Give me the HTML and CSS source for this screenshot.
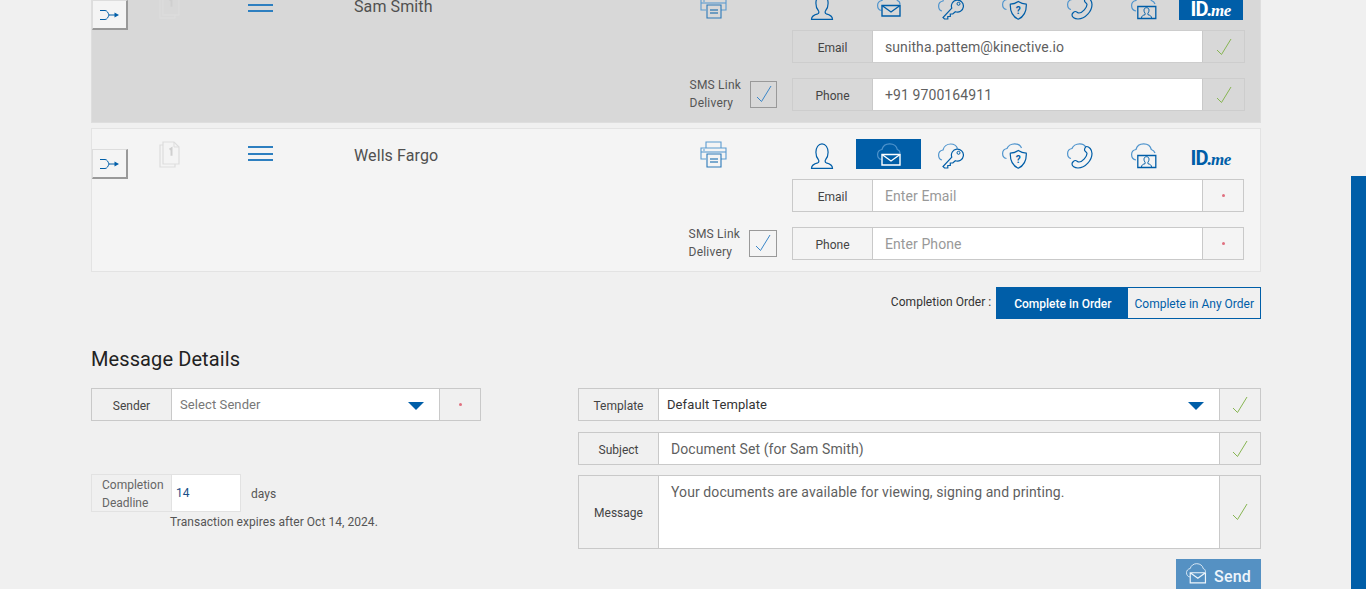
FILE: index.html
```html
<!DOCTYPE html>
<html lang="en">
<head>
<meta charset="utf-8">
<title>Message Details</title>
<link rel="stylesheet" href="styles.css">
</head>
<body>
<svg class="defs" width="0" height="0" aria-hidden="true">
  <defs>
    <symbol id="i-shuffle" viewBox="0 0 22 12"><path d="M1 1.5h5c2 0 3 2 4 4.500c-1 2.500-2 4.500-4 4.500H1M10 6h7" fill="none" stroke="currentColor" stroke-width="1"/><path d="M15.500 3.500L20 6l-4.500 2.500z" fill="currentColor"/></symbol>
    <symbol id="i-doc" viewBox="0 0 22 27"><path d="M4 4H1v22h15v-3" fill="none" stroke="currentColor" stroke-width="1.200"/><path d="M4 1h11l5 5v17H4z" fill="none" stroke="currentColor" stroke-width="1.200"/><path d="M15 1v5h5" fill="none" stroke="currentColor"/><path d="M10.500 8.500l2-1.200v7.500" fill="none" stroke="#cfcfcf" stroke-width="2"/></symbol>
    <symbol id="i-print" viewBox="0 0 27 27"><g fill="none" stroke="#5b9bd0" stroke-width="1.100"><path d="M6 7V1h15v6"/><path d="M6 18H1V7h25v11h-5"/><path d="M1 11h25"/><path d="M7 13h14v13H7z" stroke="#2a78b8"/><path d="M3 9h2"/><path d="M10 18h8M10 21h8" stroke="#005ea8"/></g></symbol>
    <symbol id="i-person" viewBox="0 0 26 26"><path d="M2.500 25.300c0-3 2.200-4.500 6.300-5.500c1.300-.5 1.300-2.300.5-3.300c-1.600-1.700-2.400-4.200-2.400-7.200c0-4.800 2.600-8.500 6.100-8.500s6.100 3.700 6.100 8.500c0 3-.8 5.500-2.400 7.200c-.8 1-.8 2.800.5 3.300c4.100 1 6.300 2.500 6.300 5.500z" fill="none" stroke="currentColor" stroke-width="1.200"/></symbol>
    <symbol id="i-mail" viewBox="0 0 26 26"><path class="cloud" d="M4.500 16.500C2 16 .6 14 .6 11.500C.6 9 2.300 7 5 6.500C5.800 3 9 .8 12.700 .8C16.800 .8 19.800 3.300 20.300 6.500C22 7 23 8.500 23 10.500" fill="none" stroke-width="1.200"/><path d="M5 11.500h18v10.500H5z" fill="none" stroke="currentColor" stroke-width="1.400"/><path d="M5 11.500l9 6.500l9-6.500" fill="none" stroke="currentColor" stroke-width="1.400"/></symbol>
    <symbol id="i-key" viewBox="0 0 26 26"><path class="cloud" d="M4 17C1.800 16.500.6 14.500.6 12C.6 9.500 2.300 7.500 5 7C5.800 3.500 9 1 12.700 1C16 1 18.500 2.800 19.500 5.500" fill="none" stroke-width="1.200"/><path d="M13.800 14.200a6 6 0 1 1 3.500 3.500L14.800 20h-2.500v2.500h-2.500V25H6.500L5 23.500z" fill="none" stroke="currentColor" stroke-width="1.200"/><circle cx="20.500" cy="9.800" r="1.500" fill="none" stroke="currentColor"/></symbol>
    <symbol id="i-shield" viewBox="0 0 26 26"><path class="cloud" d="M4.500 15.500C2 15 .6 13 .6 10.500C.6 8 2.300 6 5 5.500C5.800 3 9 .8 12.700 .8C15.800 .8 18.500 2.500 19.500 5" fill="none" stroke-width="1.200"/><path d="M16.300 7.500c2.500 1.700 5 2.500 8 2.700c.3 7-2.500 12.500-8 15c-5.500-2.500-8.300-8-8-15c3-.2 5.500-1 8-2.700z" fill="none" stroke="currentColor" stroke-width="1.200"/><text x="16.300" y="19.500" class="svg-q">?</text></symbol>
    <symbol id="i-phone" viewBox="0 0 26 26"><path class="cloud" d="M4 15.500C1.800 15 .6 13 .6 10.500C.6 8 2.300 6 5 5.500C5.800 3 9 .8 12.700 .8C15.800 .8 18 2.300 19 4.500" fill="none" stroke-width="1.200"/><path d="M19.500 3.500c2.500 0 5.500 3 5.500 7c0 6.500-6.500 14.500-14 14.500c-3.500 0-6-2-6-4c0-1.300 1.800-3.500 3.500-3.500c1.300 0 2 1.500 3.500 1.500c3.500 0 8-5.500 8-8.500c0-1.500-2.500-2-2.500-3.500c0-1.500 1-3.500 2-3.500z" fill="none" stroke="currentColor" stroke-width="1.200"/></symbol>
    <symbol id="i-id" viewBox="0 0 26 26"><path class="cloud" d="M5 17C2 16.500.6 14 .6 11.500C.6 9 2.300 7 5 6.500C5.800 3 9 .8 12.700 .8C16.500 .8 19.500 3 20.300 6.500C22 7 23.500 8.500 24 10" fill="none" stroke-width="1.200"/><path d="M6.800 12.500h18v12h-18z" fill="none" stroke="currentColor" stroke-width="1.300"/><path d="M10.500 24c0-2 1.500-2.800 3.500-3.300c.5-.5.300-1-.2-1.800c-.6-1-.8-1.700-.8-2.700c0-1.500 1-2.500 2.500-2.500s2.500 1 2.500 2.500c0 1-.2 1.700-.8 2.700c-.5.800-.7 1.300-.2 1.800c2 .5 3.500 1.300 3.500 3.300" fill="none" stroke="currentColor"/></symbol>
    <symbol id="i-check" viewBox="0 0 16 18"><path d="M1 12l4.500 4.500L15 1" fill="none" stroke="currentColor" stroke-width="1"/></symbol>
    <symbol id="i-send" viewBox="0 0 26 26"><path d="M4.500 16.500C2 16 .6 14 .6 11.500C.6 9 2.300 7 5 6.500C5.800 3 9 .8 12.700 .8C16.800 .8 19.800 3.300 20.300 6.500C22 7 23 8.500 23 10.500" fill="none" stroke="currentColor" stroke-width="1"/><path d="M5 11.500h18v12H5zM5 11.500l9 6.500l9-6.500" fill="none" stroke="currentColor" stroke-width="1.400"/></symbol>
  </defs>
</svg>

<main class="page">
  <section class="card card-selected">
    <div class="card-left">
      <div class="card-head">
        <button class="shuffle" type="button"><svg class="shuffle-icon"><use href="#i-shuffle"/></svg></button>
        <svg class="doc-icon"><use href="#i-doc"/></svg>
        <div class="menu-lines"><span></span><span></span><span></span></div>
        <div class="signer-name">Sam Smith</div>
        <svg class="print-icon"><use href="#i-print"/></svg>
      </div>
      <div class="sms-row">
        <div class="sms-label">SMS Link<br>Delivery</div>
        <div class="sms-box"><svg class="sms-check"><use href="#i-check"/></svg></div>
      </div>
    </div>
    <div class="card-right">
      <div class="tabs">
        <div class="tab"><svg class="tab-icon"><use href="#i-person"/></svg></div>
        <div class="tab"><svg class="tab-icon"><use href="#i-mail"/></svg></div>
        <div class="tab"><svg class="tab-icon"><use href="#i-key"/></svg></div>
        <div class="tab"><svg class="tab-icon"><use href="#i-shield"/></svg></div>
        <div class="tab"><svg class="tab-icon"><use href="#i-phone"/></svg></div>
        <div class="tab"><svg class="tab-icon"><use href="#i-id"/></svg></div>
        <div class="tab tab-active"><span class="idme">ID.<em>me</em></span></div>
      </div>
      <div class="field">
        <div class="field-label">Email</div>
        <div class="field-value">sunitha.pattem@kinective.io</div>
        <div class="field-status"><svg class="ok"><use href="#i-check"/></svg></div>
      </div>
      <div class="field">
        <div class="field-label">Phone</div>
        <div class="field-value">+91 9700164911</div>
        <div class="field-status"><svg class="ok"><use href="#i-check"/></svg></div>
      </div>
    </div>
  </section>

  <section class="card">
    <div class="card-left">
      <div class="card-head">
        <button class="shuffle" type="button"><svg class="shuffle-icon"><use href="#i-shuffle"/></svg></button>
        <svg class="doc-icon"><use href="#i-doc"/></svg>
        <div class="menu-lines"><span></span><span></span><span></span></div>
        <div class="signer-name">Wells Fargo</div>
        <svg class="print-icon"><use href="#i-print"/></svg>
      </div>
      <div class="sms-row">
        <div class="sms-label">SMS Link<br>Delivery</div>
        <div class="sms-box"><svg class="sms-check"><use href="#i-check"/></svg></div>
      </div>
    </div>
    <div class="card-right">
      <div class="tabs">
        <div class="tab"><svg class="tab-icon"><use href="#i-person"/></svg></div>
        <div class="tab tab-active"><svg class="tab-icon"><use href="#i-mail"/></svg></div>
        <div class="tab"><svg class="tab-icon"><use href="#i-key"/></svg></div>
        <div class="tab"><svg class="tab-icon"><use href="#i-shield"/></svg></div>
        <div class="tab"><svg class="tab-icon"><use href="#i-phone"/></svg></div>
        <div class="tab"><svg class="tab-icon"><use href="#i-id"/></svg></div>
        <div class="tab"><span class="idme">ID.<em>me</em></span></div>
      </div>
      <div class="field">
        <div class="field-label">Email</div>
        <div class="field-value placeholder">Enter Email</div>
        <div class="field-status"><span class="req"></span></div>
      </div>
      <div class="field">
        <div class="field-label">Phone</div>
        <div class="field-value placeholder">Enter Phone</div>
        <div class="field-status"><span class="req"></span></div>
      </div>
    </div>
  </section>

  <div class="order-row">
    <span class="order-label">Completion Order :</span>
    <div class="order-toggle">
      <span class="order-opt order-on">Complete in Order</span>
      <span class="order-opt">Complete in Any Order</span>
    </div>
  </div>

  <h2 class="section-title">Message Details</h2>

  <div class="details">
    <div class="details-left">
      <div class="field field-sm">
        <div class="field-label">Sender</div>
        <div class="field-value select muted">Select Sender<span class="caret"></span></div>
        <div class="field-status"><span class="req"></span></div>
      </div>
      <div class="deadline">
        <div class="deadline-label">Completion Deadline</div>
        <div class="deadline-value">14</div>
        <div class="deadline-unit">days</div>
      </div>
      <div class="deadline-note">Transaction expires after Oct 14, 2024.</div>
    </div>
    <div class="details-right">
      <div class="field field-sm">
        <div class="field-label">Template</div>
        <div class="field-value select dark">Default Template<span class="caret"></span></div>
        <div class="field-status"><svg class="ok"><use href="#i-check"/></svg></div>
      </div>
      <div class="field field-sm field-subject">
        <div class="field-label">Subject</div>
        <div class="field-value">Document Set (for Sam Smith)</div>
        <div class="field-status"><svg class="ok"><use href="#i-check"/></svg></div>
      </div>
      <div class="field field-sm field-tall">
        <div class="field-label">Message</div>
        <div class="field-value field-text">Your documents are available for viewing, signing and printing.</div>
        <div class="field-status"><svg class="ok"><use href="#i-check"/></svg></div>
      </div>
      <div class="send-row">
        <button class="send" type="button"><svg class="send-icon"><use href="#i-send"/></svg>Send</button>
      </div>
    </div>
  </div>
</main>
<div class="side-bar"></div>
</body>
</html>
```

FILE: styles.css
```css
* { box-sizing: border-box; }
html, body { margin: 0; height: 589px; overflow: hidden; }
body { background: #f0f0f0; color: #444; font-family: Roboto, "Liberation Sans", sans-serif; position: relative; }
.defs { position: absolute; }
.page { width: 1170px; margin: -21px 0 0 91px; }

.card { display: flex; height: 144px; background: #f4f4f4; border: 1px solid #e3e3e3; margin-bottom: 5px; }
.card-selected { background: #d8d8d8; border-color: #dedede; }
.card-left { width: 700px; display: flex; flex-direction: column; justify-content: space-between; }
.card-head { display: flex; align-items: flex-start; }
.shuffle { width: 36px; height: 30px; margin-top: 20px; padding: 0; background: #f4f4f4; border: 0; border-top: 1px solid #ddd; border-left: 1px solid #ddd; border-right: 2px solid #999; border-bottom: 2px solid #999; display: flex; align-items: center; justify-content: center; color: #005ea8; }
.shuffle-icon { width: 22px; height: 12px; }
.doc-icon { width: 22px; height: 27px; margin: 12px 67px 0 31px; color: #ddd; }
.menu-lines { width: 25px; margin: 17px 81px 0 0; display: flex; flex-direction: column; gap: 4.670px; }
.menu-lines span { height: 2px; background: #2d7fc0; }
.signer-name { width: 346px; margin-top: 17px; font-size: 16px; line-height: 20px; letter-spacing: .1px; color: #505050; }
.print-icon { width: 27px; height: 27px; margin-top: 12px; }

.sms-row { display: flex; justify-content: flex-end; align-items: center; gap: 9px; padding: 0 15px 10px 0; }
.sms-label { font-size: 12px; line-height: 18px; letter-spacing: .2px; color: #555; }
.sms-box { width: 28px; height: 27px; border: 1px solid #999; display: flex; align-items: center; justify-content: center; color: #3a86c8; }
.card-selected .sms-box { width: 27px; }
.sms-check { width: 16px; height: 18px; }

.card-right { width: 452px; padding-top: 10px; }
.card-selected .card-right { width: 453px; }
.tabs { display: flex; width: 451px; height: 30px; margin-bottom: 10px; }
.tab { flex: 1; display: flex; justify-content: center; padding-top: 4px; color: #005ea8; }
.tab-active { background: #005ea8; color: #fff; }
.tab-icon { width: 26px; height: 26px; margin-right: 4px; }
.tab:nth-child(2) .tab-icon { margin-right: 0; margin-left: 2px; }
.cloud { stroke: #4f94cd; }
.tab-active .cloud { stroke: #fff; }
.svg-q { font: 700 10px Roboto, sans-serif; fill: currentColor; text-anchor: middle; }
.idme { font-size: 20px; line-height: 30px; font-weight: 700; letter-spacing: -1px; margin-top: -4px; padding-top: 4px; }
.idme em { font-size: 17px; font-family: "Liberation Serif", serif; letter-spacing: -.5px; }

.field { display: flex; height: 33px; margin-bottom: 15px; border: 1px solid #c9c9c9; }
.field:last-child { margin-bottom: 0; }
.field-label { width: 80px; flex: none; display: flex; align-items: center; justify-content: center; padding-top: 2px; font-size: 12px; color: #444; border-right: 1px solid #c9c9c9; }
.field-value { flex: 1; background: #fff; display: flex; align-items: center; padding-left: 12px; font-size: 14px; color: #5f5f5f; letter-spacing: .09px; min-width: 0; }
.placeholder { color: #999; }
.field-status { width: 41px; flex: none; display: flex; align-items: center; justify-content: center; border-left: 1px solid #c9c9c9; }
.card-selected .field-status { width: 42px; }
.card-selected .field { border-color: #cdcdcd; }
.ok { width: 16px; height: 18px; color: #87b552; }
.req { width: 3px; height: 3px; border-radius: 50%; background: #e0707f; }

.order-row { display: flex; justify-content: flex-end; align-items: center; gap: 5px; margin-top: 15px; }
.order-label { font-size: 12px; letter-spacing: .03px; color: #333; margin-top: -3px; }
.order-toggle { display: flex; height: 32px; border: 1px solid #005ea8; }
.order-opt { display: flex; align-items: center; padding: 2px 6px 0; font-size: 12px; color: #005ea8; }
.order-on { background: #005ea8; color: #fff; font-weight: 500; padding: 2px 17px 0; }

.section-title { margin: 28px 0 17px; font-size: 20px; line-height: 24px; font-weight: 400; letter-spacing: .1px; color: #222; }

.details { display: flex; justify-content: space-between; }
.details-left { width: 390px; }
.details-right { width: 683px; }
.field-sm { margin-bottom: 11px; }
.field-subject { margin-bottom: 10px; }
.field-tall { height: 74px; margin-bottom: 10px; }
.field-text { align-items: flex-start; padding-top: 8px; }
.select { justify-content: space-between; padding: 0 8px; font-size: 13px; }
.muted { color: #777; }
.dark { color: #333; }
.caret { width: 0; height: 0; border: 8px solid transparent; border-top-color: #005ea8; border-bottom: 0; margin-right: 7px; margin-top: 3px; }

.deadline { display: flex; height: 38px; margin-top: 53px; }
.deadline-label { width: 80px; border: 1px solid #e2e2e2; border-right: 0; padding: 1px 0 0 10px; font-size: 12px; line-height: 18px; color: #666; }
.deadline-value { width: 70px; background: #fff; border: 1px solid #e2e2e2; display: flex; align-items: center; padding-left: 4px; font-size: 12px; color: #1a4f88; }
.deadline-unit { margin-left: 10px; padding-top: 1px; font-size: 12px; line-height: 38px; color: #555; }
.deadline-note { margin: 2px 0 0 79px; font-size: 12px; line-height: 16px; letter-spacing: .05px; color: #555; }

.send-row { display: flex; justify-content: flex-end; }
.send { width: 85px; height: 36px; padding: 0 0 0 10px; border: 0; background: #5591c3; color: #eef5fb; display: flex; align-items: flex-start; gap: 6px; font: 500 16px/36px Roboto, sans-serif; letter-spacing: .2px; }
.send-icon { width: 22px; height: 22px; margin-top: 4px; flex: none; }

.side-bar { position: absolute; top: 176px; right: 0; bottom: 0; width: 15px; background: #005ea8; }
```
